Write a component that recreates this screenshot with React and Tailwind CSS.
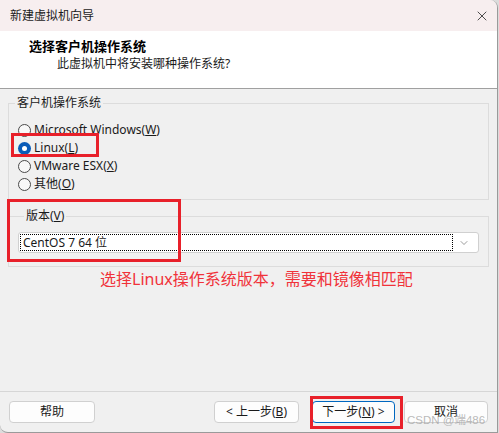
import { X, ChevronDown } from 'lucide-react';

const font = { fontFamily: '"Noto Sans", "Noto Sans CJK SC", sans-serif' };

function Radio({ checked, label, hotkey }) {
    return (
        <div className="flex items-center h-[18px] pl-[9px]">
            {checked ? (
                <span className="w-[13px] h-[13px] rounded-full bg-[#0a5cb8] flex items-center justify-center">
                    <span className="w-[5px] h-[5px] rounded-full bg-white"></span>
                </span>
            ) : (
                <span className="w-[13px] h-[13px] rounded-full border border-[#4a4a4a] bg-[#f8f8f8]"></span>
            )}
            <span className="ml-[3px] text-[12px] text-[#1a1a1a] leading-none">
                {label}(<span className="underline">{hotkey}</span>)
            </span>
        </div>
    );
}

export default function App() {
    return (
        <div className="w-[499px] h-[433px] bg-[#dcdcdc] relative overflow-hidden" style={font}>
            <div className="w-[498px] h-[433px] flex flex-col bg-[#f0f0f0] border-r border-b border-[#9a9a9a] rounded-tr-[8px] rounded-bl-[8px] overflow-hidden">
                {/* title bar */}
                <div className="h-[31px] shrink-0 bg-[#f7eeef] flex items-center justify-between pl-[10px] pr-[7px]">
                    <span className="text-[12px] text-[#1a1a1a]">新建虚拟机向导</span>
                    <X size={16} strokeWidth={1.2} className="text-[#222]" />
                </div>

                {/* header */}
                <div className="h-[58px] shrink-0 bg-white border-b border-[#a0a0a0] pl-[29px] pt-[6px]">
                    <div className="text-[13px] font-bold leading-[18px] text-black">选择客户机操作系统</div>
                    <div className="text-[12px] leading-[18px] text-[#1a1a1a] pl-[28px]">此虚拟机中将安装哪种操作系统?</div>
                </div>

                {/* body */}
                <div className="flex-1 flex flex-col">
                    <fieldset className="mx-[8px] mt-[6px] border border-[#dcdcdc] pt-[10px] pb-[6px]">
                        <legend className="ml-[6px] px-[2px] text-[12px] leading-[16px] text-[#1a1a1a]">客户机操作系统</legend>
                        <Radio label="Microsoft Windows" hotkey="W" />
                        <Radio checked label="Linux" hotkey="L" />
                        <Radio label="VMware ESX" hotkey="X" />
                        <Radio label="其他" hotkey="O" />
                    </fieldset>

                    <fieldset className="mx-[8px] mt-[8px] border border-[#dcdcdc] pt-[8px] pb-[13px] px-[9px]">
                        <legend className="ml-[6px] px-[2px] text-[12px] leading-[16px] text-[#1a1a1a]">
                            版本(<span className="underline">V</span>)
                        </legend>
                        <div className="h-[21px] bg-white border border-[#d0d0d0] rounded-[3px] flex items-center pl-[1px] pr-[8px]">
                            <div className="flex-1 h-[17px] border border-dotted border-black flex items-center pl-[2px]">
                                <span className="text-[12px] text-[#1a1a1a] leading-none">CentOS 7 64 位</span>
                            </div>
                            <ChevronDown size={12} strokeWidth={1.3} className="ml-[5px] text-[#666]" />
                        </div>
                    </fieldset>

                    <div className="mt-[2px] ml-[100px] text-[16px] leading-[20px] text-[#f0323a]">
                        选择Linux操作系统版本，需要和镜像相匹配
                    </div>

                    <div className="flex-1"></div>

                    {/* footer */}
                    <div className="h-[41px] border-t border-[#d6d6d6] flex pt-[9px]">
                        <button className="ml-[9px] w-[86px] h-[22px] bg-[#fdfdfd] border border-[#d0d0d0] rounded-[4px] text-[12px] text-[#1a1a1a]">
                            帮助
                        </button>
                        <button className="ml-[119px] w-[85px] h-[22px] bg-[#fdfdfd] border border-[#d0d0d0] rounded-[4px] text-[12px] text-[#1a1a1a]">
                            &lt; 上一步(<span className="underline">B</span>)
                        </button>
                        <button className="ml-[13px] w-[83px] h-[22px] bg-[#fdfdfd] border border-[#0067c0] rounded-[4px] text-[12px] text-[#1a1a1a]">
                            下一步(<span className="underline">N</span>) &gt;
                        </button>
                        <button className="ml-[9px] w-[84px] h-[22px] bg-[#fdfdfd] border border-[#d0d0d0] rounded-[4px] text-[12px] text-[#1a1a1a]">
                            取消
                        </button>
                    </div>
                </div>
            </div>

            {/* annotations */}
            <div className="absolute left-[11px] top-[133px] w-[88px] h-[24px] border-[3px] border-[#e8202a]"></div>
            <div className="absolute left-[7px] top-[199px] w-[174px] h-[63px] border-[3px] border-[#e8202a]"></div>
            <div className="absolute left-[310px] top-[396px] w-[93px] h-[33px] border-[3px] border-[#e8202a]"></div>
            <div className="absolute left-[407px] top-[413px] text-[11.5px] leading-[14px] text-[#a8a8a8]/80" style={{ fontFamily: '"Liberation Sans", "Noto Sans CJK SC", sans-serif' }}>
                CSDN @端486
            </div>
        </div>
    );
}
